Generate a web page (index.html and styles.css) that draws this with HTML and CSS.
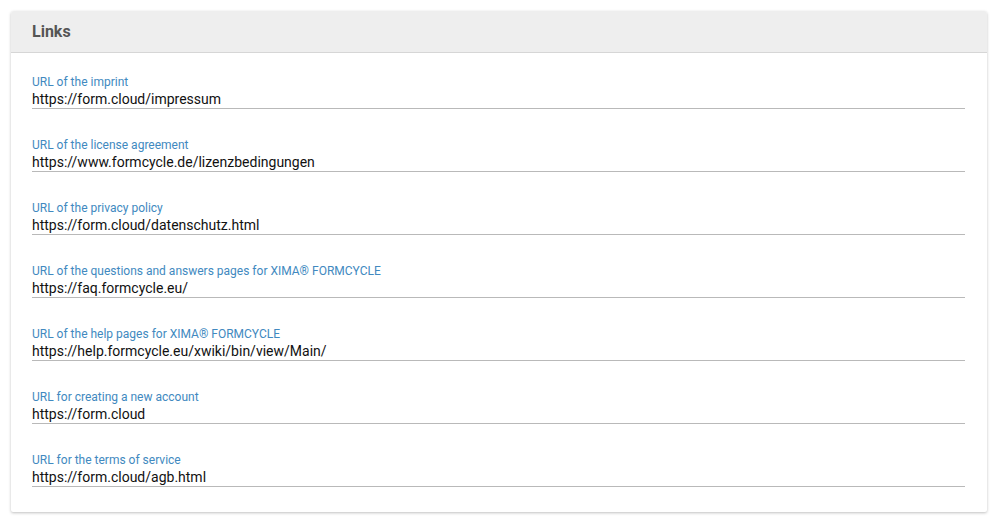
FILE: index.html
```html
<!DOCTYPE html>
<html lang="en">
<head>
    <meta charset="UTF-8">
    <meta name="viewport" content="width=device-width, initial-scale=1.0">
    <title>Links</title>
    <link rel="stylesheet" href="styles.css">
</head>
<body>
    <div class="panel">
        <div class="panel-header">Links</div>
        <form class="panel-body">
            <div class="field">
                <label for="imprint">URL of the imprint</label>
                <input type="text" id="imprint" value="https://form.cloud/impressum">
            </div>
            <div class="field">
                <label for="license">URL of the license agreement</label>
                <input type="text" id="license" value="https://www.formcycle.de/lizenzbedingungen">
            </div>
            <div class="field">
                <label for="privacy">URL of the privacy policy</label>
                <input type="text" id="privacy" value="https://form.cloud/datenschutz.html">
            </div>
            <div class="field">
                <label for="faq">URL of the questions and answers pages for XIMA® FORMCYCLE</label>
                <input type="text" id="faq" value="https://faq.formcycle.eu/">
            </div>
            <div class="field">
                <label for="help">URL of the help pages for XIMA® FORMCYCLE</label>
                <input type="text" id="help" value="https://help.formcycle.eu/xwiki/bin/view/Main/">
            </div>
            <div class="field">
                <label for="account">URL for creating a new account</label>
                <input type="text" id="account" value="https://form.cloud">
            </div>
            <div class="field">
                <label for="terms">URL for the terms of service</label>
                <input type="text" id="terms" value="https://form.cloud/agb.html">
            </div>
        </form>
    </div>
</body>
</html>
```

FILE: styles.css
```css
body {
    margin: 0;
    padding: 11px 12px 10px 11px;
    font-family: Roboto, "Liberation Sans", sans-serif;
    background-color: #fff;
}
.panel {
    background-color: white;
    border-radius: 3px 3px 2px 2px;
    box-shadow: 0 1px 3px rgba(0, 0, 0, 0.25);
}
.panel-header {
    height: 41px;
    line-height: 42px;
    padding-left: 21px;
    background-color: #eeeeee;
    border-bottom: 1px solid #d6d6d6;
    border-radius: 3px 3px 0 0;
    font-size: 16px;
    font-weight: bold;
    color: #555;
}
.panel-body {
    display: flex;
    flex-direction: column;
    gap: 28px;
    padding: 21px 22px 25px 21px;
}
.field {
    display: flex;
    flex-direction: column;
}
.field label {
    font-size: 12px;
    line-height: 16px;
    color: #4189c0;
}
.field input {
    font-family: Roboto, "Liberation Sans", sans-serif;
    font-size: 14px;
    color: #111;
    height: 18px;
    padding: 0;
    margin: 0;
    border: none;
    border-bottom: 1px solid #b9b9b9;
    outline: none;
    background: transparent;
}
```
